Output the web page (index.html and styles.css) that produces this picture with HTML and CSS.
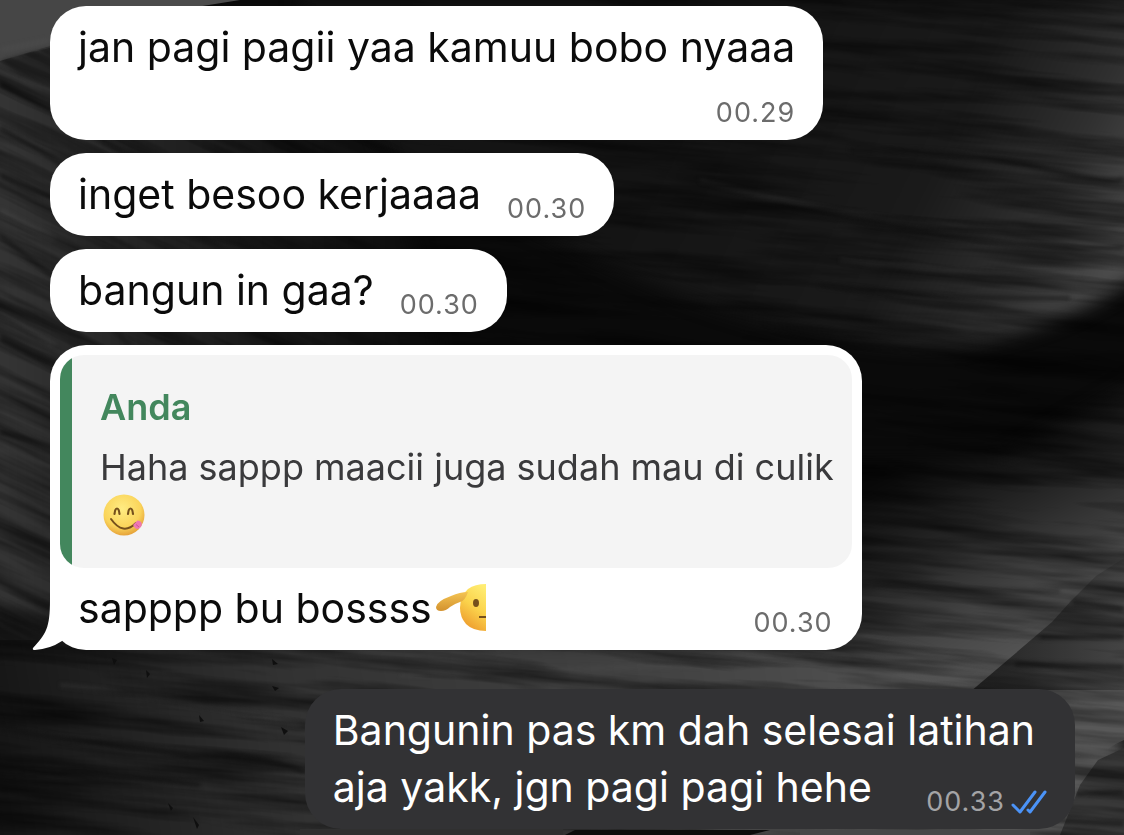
FILE: index.html
```
<!DOCTYPE html>
<html lang="id">
<head>
    <meta charset="UTF-8">
    <meta name="viewport" content="width=device-width, initial-scale=1.0">
    <title>Chat</title>
    <link rel="stylesheet" href="styles.css">
</head>
<body>

    <!-- dune wallpaper -->
    <svg class="wallpaper" viewBox="0 0 1124 835" preserveAspectRatio="xMidYMid slice" aria-hidden="true">
        <defs>
            <linearGradient id="left" x1="0" x2="1" y1="0" y2="0">
                <stop offset="0" stop-color="#383838"/>
                <stop offset="0.4" stop-color="#222222"/>
                <stop offset="1" stop-color="#0b0b0b"/>
            </linearGradient>
            <linearGradient id="upper" gradientUnits="userSpaceOnUse" x1="700" x2="1124" y1="60" y2="270">
                <stop offset="0" stop-color="#141414"/>
                <stop offset="0.55" stop-color="#1a1a1a"/>
                <stop offset="0.8" stop-color="#303030"/>
                <stop offset="1" stop-color="#505050"/>
            </linearGradient>
            <linearGradient id="lower" gradientUnits="userSpaceOnUse" x1="900" x2="1010" y1="470" y2="690">
                <stop offset="0" stop-color="#0a0a0a"/>
                <stop offset="0.35" stop-color="#262626"/>
                <stop offset="0.7" stop-color="#484848"/>
                <stop offset="1" stop-color="#5a5a5a"/>
            </linearGradient>
            <linearGradient id="floor" gradientUnits="userSpaceOnUse" x1="0" x2="1000" y1="830" y2="640">
                <stop offset="0" stop-color="#141414"/>
                <stop offset="0.3" stop-color="#323232"/>
                <stop offset="0.7" stop-color="#444444"/>
                <stop offset="1" stop-color="#585858"/>
            </linearGradient>
            <linearGradient id="edge" x1="0" x2="1" y1="0" y2="0">
                <stop offset="0" stop-color="#222222"/>
                <stop offset="1" stop-color="#444444"/>
            </linearGradient>
            <clipPath id="leftside"><path d="M0 61L50 46H400V640H0z"/></clipPath>
            <clipPath id="rightside"><path d="M0 640H400V0H1124V835H0z"/></clipPath>
            <filter id="soft" x="-20%" y="-20%" width="140%" height="140%" color-interpolation-filters="sRGB"><feGaussianBlur stdDeviation="9"/></filter>
            <filter id="line" x="-20%" y="-50%" width="140%" height="200%" color-interpolation-filters="sRGB"><feGaussianBlur stdDeviation="2"/></filter>
            <filter id="grain" x="0" y="0" width="100%" height="100%" color-interpolation-filters="sRGB">
                <feTurbulence type="fractalNoise" baseFrequency="0.005 0.06" numOctaves="4" seed="8"/>
                <feColorMatrix values="0 0 0 0 0  0 0 0 0 0  0 0 0 0 0  1.2 0 0 0 -0.45"/>
            </filter>
        </defs>
        <rect width="1124" height="835" fill="#0a0a0a"/>
        <path d="M300 0H1160V258Q1080 325 960 345Q800 350 620 270Q420 180 300 100z" fill="url(#upper)" filter="url(#soft)"/>
        <path d="M-30 40L60 20H300Q400 140 440 350V680H-30z" fill="url(#left)" filter="url(#soft)"/>
        <path d="M800 460L1000 460L1160 370V720L860 760H700z" fill="url(#lower)" filter="url(#soft)"/>
        <path d="M-30 610Q450 640 880 650L1000 690L1124 730V860H-30z" fill="url(#floor)" filter="url(#soft)"/>
        <path d="M1124 558L1096 576L1070 602L1052 622L1010 658L970 692H1124z" fill="url(#edge)"/>
        <path d="M1040 690H1124V740Q1098 750 1075 790H1040z" fill="#585858"/>
        <path d="M1124 748L1098 760L1080 785L1060 835H1124z" fill="#383838"/>
        <path d="M0 0H110V30Q70 40 50 48Q20 55 0 61z" fill="#464646"/>
        <path d="M110 0H240L190 8H110z" fill="#4c4c4c"/>
        <path d="M0 61Q30 52 60 46V84L20 76z" fill="#262626" filter="url(#line)"/>
        <g fill="none" stroke="#121212" stroke-opacity="0.8" filter="url(#line)">
            <path d="M0 84Q60 115 110 145T300 180" stroke-width="5"/>
            <path d="M0 128Q40 150 70 170" stroke-width="4"/>
            <path d="M0 176Q40 195 60 200T260 250" stroke-width="4"/>
            <path d="M0 236Q60 280 130 345" stroke-width="3"/>
            <path d="M0 338Q30 354 60 366" stroke-width="6"/>
            <path d="M0 432Q26 438 60 450" stroke-width="4"/>
            <path d="M0 728Q50 738 90 742T190 756Q260 754 305 772" stroke-width="4"/>
            <path d="M0 775Q100 770 200 785" stroke-width="4"/>
            <path d="M780 205Q900 230 980 240T1124 248" stroke-width="3"/>
            <path d="M820 285Q940 300 1070 298" stroke-width="3"/>
            <path d="M850 150Q960 150 1040 168T1124 178" stroke-width="5"/>
            <path d="M860 585Q960 590 1060 591" stroke-width="2"/>
            <path d="M1072 602L1124 609M1040 637H1124M1015 664L1124 667" stroke-width="4"/>
            <path d="M1076 794L1124 792M1050 820L1124 824" stroke-width="4"/>
        </g>
        <g fill="none" stroke="#555" stroke-opacity="0.3" filter="url(#line)">
            <path d="M700 180Q880 228 1010 228T1124 230" stroke-width="3"/>
            <path d="M840 260Q960 275 1080 276" stroke-width="3"/>
            <path d="M0 50L50 40M0 210L55 240M0 310L55 345" stroke-width="4"/>
            <path d="M60 685Q200 700 300 725M400 675L850 660" stroke-width="3"/>
        </g>
        <g clip-path="url(#leftside)">
            <rect x="-100" y="-300" width="900" height="1100" transform="rotate(25)" filter="url(#grain)"/>
        </g>
        <g clip-path="url(#rightside)">
            <rect x="-50" y="-150" width="1300" height="1100" transform="rotate(5)" filter="url(#grain)"/>
        </g>
        <path d="M300 829H563V835H300z" fill="#303030"/>
        <path d="M575 830H770L750 835H565z" fill="#0c0c0c"/>
        <path d="M800 830H1030V835H800z" fill="#484848"/>
        <g fill="#0f0f0f">
            <path d="M112 658l5 2l-3 5zM146 670l4 4l-3 4zM272 659l6 5l-5 1zM272 686l7 2l-4 3zM199 715l5 6l-4 1zM281 727l7 4l-4 4zM168 803l5 5l-2 3zM193 817l6 8l-2 4z"/>
        </g>
    </svg>

    <main class="chat">
        <article class="bubble bubble--in bubble--stacked">
            <p class="text">jan pagi pagii yaa kamuu bobo nyaaa</p>
            <time class="time" datetime="00:29">00.29</time>
        </article>

        <article class="bubble bubble--in">
            <p class="text">inget besoo kerjaaaa</p>
            <time class="time" datetime="00:30">00.30</time>
        </article>

        <article class="bubble bubble--in">
            <p class="text">bangun in gaa?</p>
            <time class="time" datetime="00:30">00.30</time>
        </article>

        <article class="bubble bubble--in bubble--reply">
            <blockquote class="quote">
                <strong class="quote-name">Anda</strong>
                <p class="quote-text">Haha sappp maacii juga sudah mau di culik</p>
                <svg class="emoji-yum" viewBox="0 0 42 42" role="img" aria-label="yum">
                    <defs>
                        <radialGradient id="yum" cx="0.45" cy="0.35" r="0.65">
                            <stop offset="0" stop-color="#ffec83"/>
                            <stop offset="0.7" stop-color="#fad45a"/>
                            <stop offset="1" stop-color="#e6a33a"/>
                        </radialGradient>
                    </defs>
                    <circle cx="21" cy="21" r="20.500" fill="url(#yum)"/>
                    <path d="M11.500 20Q12 14.500 14 14.500T16.500 20M25 20Q25.500 14.500 27.500 14.500T30 20" fill="none" stroke="#75501c" stroke-width="2.200" stroke-linecap="round"/>
                    <path d="M8 25Q20 42 33 29" fill="none" stroke="#75501c" stroke-width="2" stroke-linecap="round"/>
                    <path d="M30 31L34.500 26.500Q40 27 38.500 32Q36 36.500 32 34z" fill="#ee78b3"/>
                    <path d="M33 30.500L36 33" stroke="#cf5794" stroke-width="1"/>
                </svg>
            </blockquote>
            <div class="row">
                <p class="text">sapppp bu bossss<svg class="emoji-salute" viewBox="0 0 50 50" role="img" aria-label="salute">
                    <defs>
                        <linearGradient id="face" x1="0.8" x2="0.4" y1="0" y2="1">
                            <stop offset="0" stop-color="#ffed73"/>
                            <stop offset="0.5" stop-color="#fbd34c"/>
                            <stop offset="1" stop-color="#ed9a2c"/>
                        </linearGradient>
                        <linearGradient id="hand" x1="0" x2="0" y1="0" y2="1">
                            <stop offset="0" stop-color="#f4c453"/>
                            <stop offset="1" stop-color="#d3922e"/>
                        </linearGradient>
                    </defs>
                    <path d="M50 1V48Q37 48 30 41Q24 34 24 25Q24 13 32 6Q39 1 50 1z" fill="url(#face)"/>
                    <path d="M32 9Q24 9 15 13Q1 18 0 24Q0 28 5 28Q10 28 14 24Q18 21 24 19Q29 18 32 9z" fill="url(#hand)"/>
                    <ellipse cx="40" cy="20" rx="3" ry="4" fill="#75501c"/>
                    <path d="M43 34H50" stroke="#75501c" stroke-width="2"/>
                </svg></p>
                <time class="time" datetime="00:30">00.30</time>
            </div>
            <svg class="tail" viewBox="0 0 36 50" aria-hidden="true">
                <path d="M18 0C18 28 14 34 1 48Q0 50 3 50Q18 49 30 41L36 30V0z" fill="#fff"/>
            </svg>
        </article>

        <article class="bubble bubble--out">
            <p class="text">Bangunin pas km dah selesai latihan<br>aja yakk, jgn pagi pagi hehe</p>
            <span class="status">
                <time class="time" datetime="00:33">00.33</time>
                <svg class="ticks" viewBox="0 0 36 26" role="img" aria-label="Dibaca">
                    <path d="M2 16L9 23L24 3M17 21L19 23L34 3" fill="none" stroke="#4b93f7" stroke-width="3" stroke-linecap="round" stroke-linejoin="round"/>
                </svg>
            </span>
        </article>
    </main>

</body>
</html>
```
FILE: styles.css
```
* {
    box-sizing: border-box;
}

body {
    margin: 0;
    min-height: 100vh;
    overflow: hidden;
    background: #0b0b0b;
    font-family: Inter, "Liberation Sans", sans-serif;
}

p,
blockquote {
    margin: 0;
}

.wallpaper {
    position: fixed;
    inset: 0;
    width: 100%;
    height: 100%;
    z-index: -1;
}

.chat {
    display: flex;
    flex-direction: column;
    align-items: flex-start;
    gap: 13px;
    padding: 6px 49px 5px 50px;
}

.bubble {
    position: relative;
    display: flex;
    align-items: flex-end;
    gap: 26px;
    padding: 13px 28px;
    border-radius: 36px;
}

.bubble--in {
    background: #fff;
    color: #0b0b0b;
}

.bubble--stacked {
    flex-direction: column;
    gap: 23px;
}

.text {
    font-size: 41px;
    line-height: 57px;
    white-space: nowrap;
}

.time {
    font-size: 27px;
    line-height: 28px;
    letter-spacing: 1px;
    color: #6c6c6c;
}

/* reply bubble */
.bubble--reply {
    flex-direction: column;
    align-items: stretch;
    gap: 12px;
    padding: 10px 10px 13px;
}

.quote {
    padding: 28px 18px 30px 40px;
    border-radius: 24px;
    background: linear-gradient(to right, #43875d 12px, #f4f4f4 12px);
    color: #3a3a3c;
}

.quote-name {
    display: block;
    margin-bottom: 12px;
    font-size: 36px;
    line-height: 48px;
    font-weight: 600;
    color: #43875d;
}

.quote-text {
    font-size: 36px;
    line-height: 48px;
    white-space: nowrap;
}

.emoji-yum {
    display: block;
    width: 42px;
    height: 42px;
    margin: 3px 3px 2px;
}

.row {
    display: flex;
    justify-content: space-between;
    align-items: flex-end;
    padding: 0 19px 0 18px;
}

.emoji-salute {
    width: 50px;
    height: 50px;
    margin-left: 4px;
    vertical-align: -10px;
}

.tail {
    position: absolute;
    left: -18px;
    bottom: 0;
    width: 36px;
    height: 50px;
}

/* sent bubble */
.bubble--out {
    align-self: flex-end;
    margin-top: 26px;
    padding-right: 40px;
    background: #323234;
    color: #fff;
}

.bubble--out .time {
    color: #a4a4a6;
}

.status {
    position: absolute;
    right: 28px;
    bottom: 13px;
    display: flex;
    align-items: center;
    gap: 6px;
}

.ticks {
    width: 36px;
    height: 26px;
}
```
